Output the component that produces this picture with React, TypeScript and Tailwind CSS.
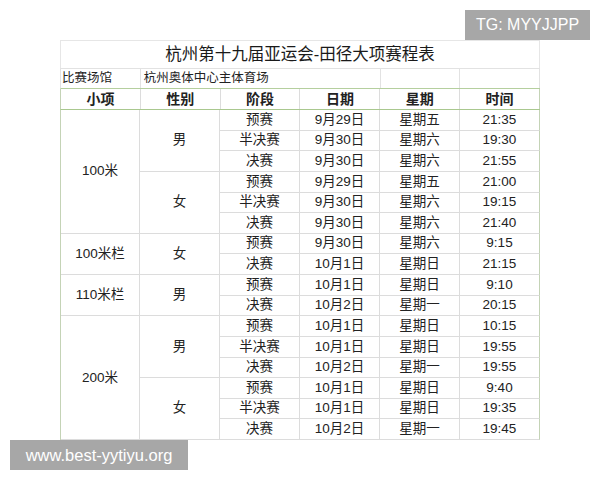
import React from 'react';

type Stage = { stage: string; date: string; day: string; time: string };
type Group = { gender: string; rows: Stage[] };
type Event = { name: string; groups: Group[] };

const events: Event[] = [
  {
    name: '100米',
    groups: [
      {
        gender: '男',
        rows: [
          { stage: '预赛', date: '9月29日', day: '星期五', time: '21:35' },
          { stage: '半决赛', date: '9月30日', day: '星期六', time: '19:30' },
          { stage: '决赛', date: '9月30日', day: '星期六', time: '21:55' },
        ],
      },
      {
        gender: '女',
        rows: [
          { stage: '预赛', date: '9月29日', day: '星期五', time: '21:00' },
          { stage: '半决赛', date: '9月30日', day: '星期六', time: '19:15' },
          { stage: '决赛', date: '9月30日', day: '星期六', time: '21:40' },
        ],
      },
    ],
  },
  {
    name: '100米栏',
    groups: [
      {
        gender: '女',
        rows: [
          { stage: '预赛', date: '9月30日', day: '星期六', time: '9:15' },
          { stage: '决赛', date: '10月1日', day: '星期日', time: '21:15' },
        ],
      },
    ],
  },
  {
    name: '110米栏',
    groups: [
      {
        gender: '男',
        rows: [
          { stage: '预赛', date: '10月1日', day: '星期日', time: '9:10' },
          { stage: '决赛', date: '10月2日', day: '星期一', time: '20:15' },
        ],
      },
    ],
  },
  {
    name: '200米',
    groups: [
      {
        gender: '男',
        rows: [
          { stage: '预赛', date: '10月1日', day: '星期日', time: '10:15' },
          { stage: '半决赛', date: '10月1日', day: '星期日', time: '19:55' },
          { stage: '决赛', date: '10月2日', day: '星期一', time: '19:55' },
        ],
      },
      {
        gender: '女',
        rows: [
          { stage: '预赛', date: '10月1日', day: '星期日', time: '9:40' },
          { stage: '半决赛', date: '10月1日', day: '星期日', time: '19:35' },
          { stage: '决赛', date: '10月2日', day: '星期一', time: '19:45' },
        ],
      },
    ],
  },
];

const cell = 'w-[80px] flex items-center justify-center border-r border-b border-[#dcdcdc]';

export default function App() {
  return (
    <div
      className="relative w-[600px] h-[480px] bg-white text-[#222] overflow-hidden"
      style={{ fontFamily: '"Liberation Sans", "Noto Sans CJK SC", sans-serif' }}
    >
      <div className="ml-[60px] mt-[40px] w-[480px]">
        {/* title */}
        <div className="h-[28px] flex items-center justify-center border border-b-0 border-[#e6e6e6] text-[16.5px] text-[#1a1a1a]">
          杭州第十九届亚运会-田径大项赛程表
        </div>

        {/* venue */}
        <div className="flex h-[21px] border-t border-l border-[#e2e2e2] border-b border-b-[#b5cf9e] text-[12.5px]">
          <div className="w-[80px] flex items-center border-r border-[#e2e2e2] pl-[1px]">比赛场馆</div>
          <div className="w-[240px] flex items-center pl-[3px]">杭州奥体中心主体育场</div>
          <div className="w-[80px] border-l border-r border-[#e2e2e2]" />
          <div className="w-[80px] border-r border-[#e2e2e2]" />
        </div>

        {/* header */}
        <div className="flex h-[21px] border-l border-[#c4d3b6] border-b border-b-[#a9c88f] text-[14px] font-bold">
          {['小项', '性别', '阶段', '日期', '星期', '时间'].map((h, i) => (
            <div
              key={h}
              className={`w-[80px] flex items-center justify-center border-r ${
                i === 5 ? 'border-[#c4d3b6]' : 'border-[#dcdcdc]'
              }`}
            >
              {h}
            </div>
          ))}
        </div>

        {/* body */}
        <div className="border-l border-[#c4d3b6] text-[13.5px]">
          {events.map((ev) => (
            <div key={ev.name} className="flex">
              <div className={cell}>{ev.name}</div>
              <div className="flex flex-col">
                {ev.groups.map((g, gi) => (
                  <div key={gi} className="flex">
                    <div className={cell}>{g.gender}</div>
                    <div className="flex flex-col">
                      {g.rows.map((r, ri) => (
                        <div key={ri} className="flex h-[20.625px]">
                          <div className={cell}>{r.stage}</div>
                          <div className={cell}>{r.date}</div>
                          <div className={cell}>{r.day}</div>
                          <div className="w-[80px] flex items-center justify-center border-r border-r-[#c4d3b6] border-b border-[#dcdcdc]">
                            {r.time}
                          </div>
                        </div>
                      ))}
                    </div>
                  </div>
                ))}
              </div>
            </div>
          ))}
        </div>
      </div>

      {/* watermarks */}
      <div className="absolute left-[465px] top-[10px] w-[125px] h-[30px] bg-[#a7a7a7] text-white text-[16px] flex items-center justify-center">
        TG: MYYJJPP
      </div>
      <div className="absolute left-[10px] top-[440px] w-[178px] h-[30px] bg-[#a7a7a7] text-white text-[16.5px] flex items-center justify-center">
        www.best-yytiyu.org
      </div>
    </div>
  );
}
